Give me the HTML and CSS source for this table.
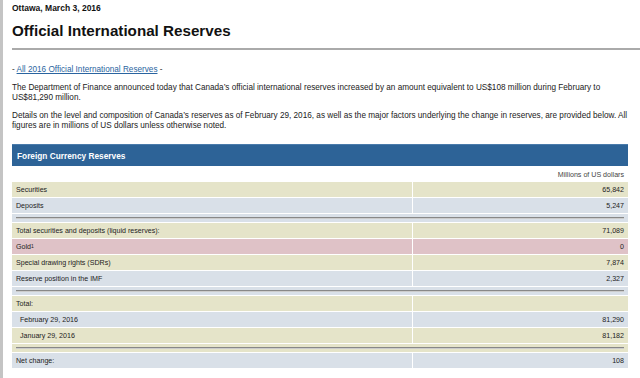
FILE: index.html
```html
<!DOCTYPE html>
<html>
<head>
<meta charset="utf-8">
<link rel="stylesheet" href="styles.css">
</head>
<body>
<div class="page">
  <p class="date">Ottawa, March 3, 2016</p>
  <h1 class="title">Official International Reserves</h1>
  <p class="links">- <a href="#">All 2016 Official International Reserves</a> -</p>
  <p class="para">The Department of Finance announced today that Canada’s official international reserves increased by an amount equivalent to US$108 million during February to US$81,290 million.</p>
  <p class="para">Details on the level and composition of Canada’s reserves as of February 29, 2016, as well as the major factors underlying the change in reserves, are provided below. All figures are in millions of US dollars unless otherwise noted.</p>
  <table class="res">
    <colgroup><col class="c1"><col class="c2"></colgroup>
    <tr class="head"><th colspan="2">Foreign Currency Reserves</th></tr>
    <tr class="units"><td></td><td>Millions of US dollars</td></tr>
    <tr class="y"><td>Securities</td><td>65,842</td></tr>
    <tr class="b"><td>Deposits</td><td>5,247</td></tr>
    <tr class="b sep"><td colspan="2"><div class="rule"></div></td></tr>
    <tr class="y"><td>Total securities and deposits (liquid reserves):</td><td>71,089</td></tr>
    <tr class="p"><td>Gold<sup>1</sup></td><td>0</td></tr>
    <tr class="y"><td>Special drawing rights (SDRs)</td><td>7,874</td></tr>
    <tr class="b"><td>Reserve position in the IMF</td><td>2,327</td></tr>
    <tr class="b sep"><td colspan="2"><div class="rule"></div></td></tr>
    <tr class="y"><td>Total:</td><td></td></tr>
    <tr class="b"><td class="ind">February 29, 2016</td><td>81,290</td></tr>
    <tr class="y"><td class="ind">January 29, 2016</td><td>81,182</td></tr>
    <tr class="y sep"><td colspan="2"><div class="rule"></div></td></tr>
    <tr class="b"><td>Net change:</td><td>108</td></tr>
  </table>
</div>
</body>
</html>
```
FILE: styles.css
```css
html, body { margin: 0; padding: 0; background: #fff; }
body { font-family: "Liberation Sans", Arial, sans-serif; color: #111; }
.page {
  border-left: 3px solid #c4c4c4;
  min-height: 378px;
  box-sizing: border-box;
  padding: 2px 0 0 9px;
}
.date { margin: 0; font-size: 8.5px; font-weight: bold; line-height: 12px; }
.title {
  margin: 6px 0 0;
  font-size: 15.2px;
  font-weight: bold;
  line-height: 22px;
  padding-bottom: 6px;
  border-bottom: 2px solid #aaa;
}
.links { margin: 15px 0 0; font-size: 8.2px; line-height: 10px; color: #333; }
.links a { color: #2a64a0; }
.para { margin: 8px 4px 0 0; font-size: 8.2px; line-height: 10px; color: #222; }
.res {
  margin-top: 13px;
  width: 616px;
  table-layout: fixed;
  border-collapse: separate;
  border-spacing: 0;
  font-size: 7.1px;
  color: #222;
}
.c1 { width: 401px; }
.c2 { width: 215px; }
.res th {
  background: #2d6397;
  color: #fff;
  text-align: left;
  font-size: 8.3px;
  font-weight: bold;
  height: 21px;
  padding: 0 0 0 5px;
  border-top: 1px solid #4a7bab;
}
.res td { height: 15px; padding: 0 4px; border-bottom: 1px solid #fff; }
.res td:first-child { border-right: 1px solid #fff; }
.res td:last-child { text-align: right; }
.res .units td { height: 15px; border: 0; color: #444; }
.res .units td:last-child { padding-top: 1px; }
.y td { background: #e5e4c9; }
.b td { background: #d9e0e8; }
.p td { background: #dfc2c7; }
.res .sep td { height: 8px; padding: 0 4px; border-right: 0; }
.rule { border-top: 1px solid #888; border-bottom: 1px solid #ccc; height: 0; }
.res td.ind { padding-left: 8px; }
sup { font-size: 5px; vertical-align: top; line-height: 6px; }
```
